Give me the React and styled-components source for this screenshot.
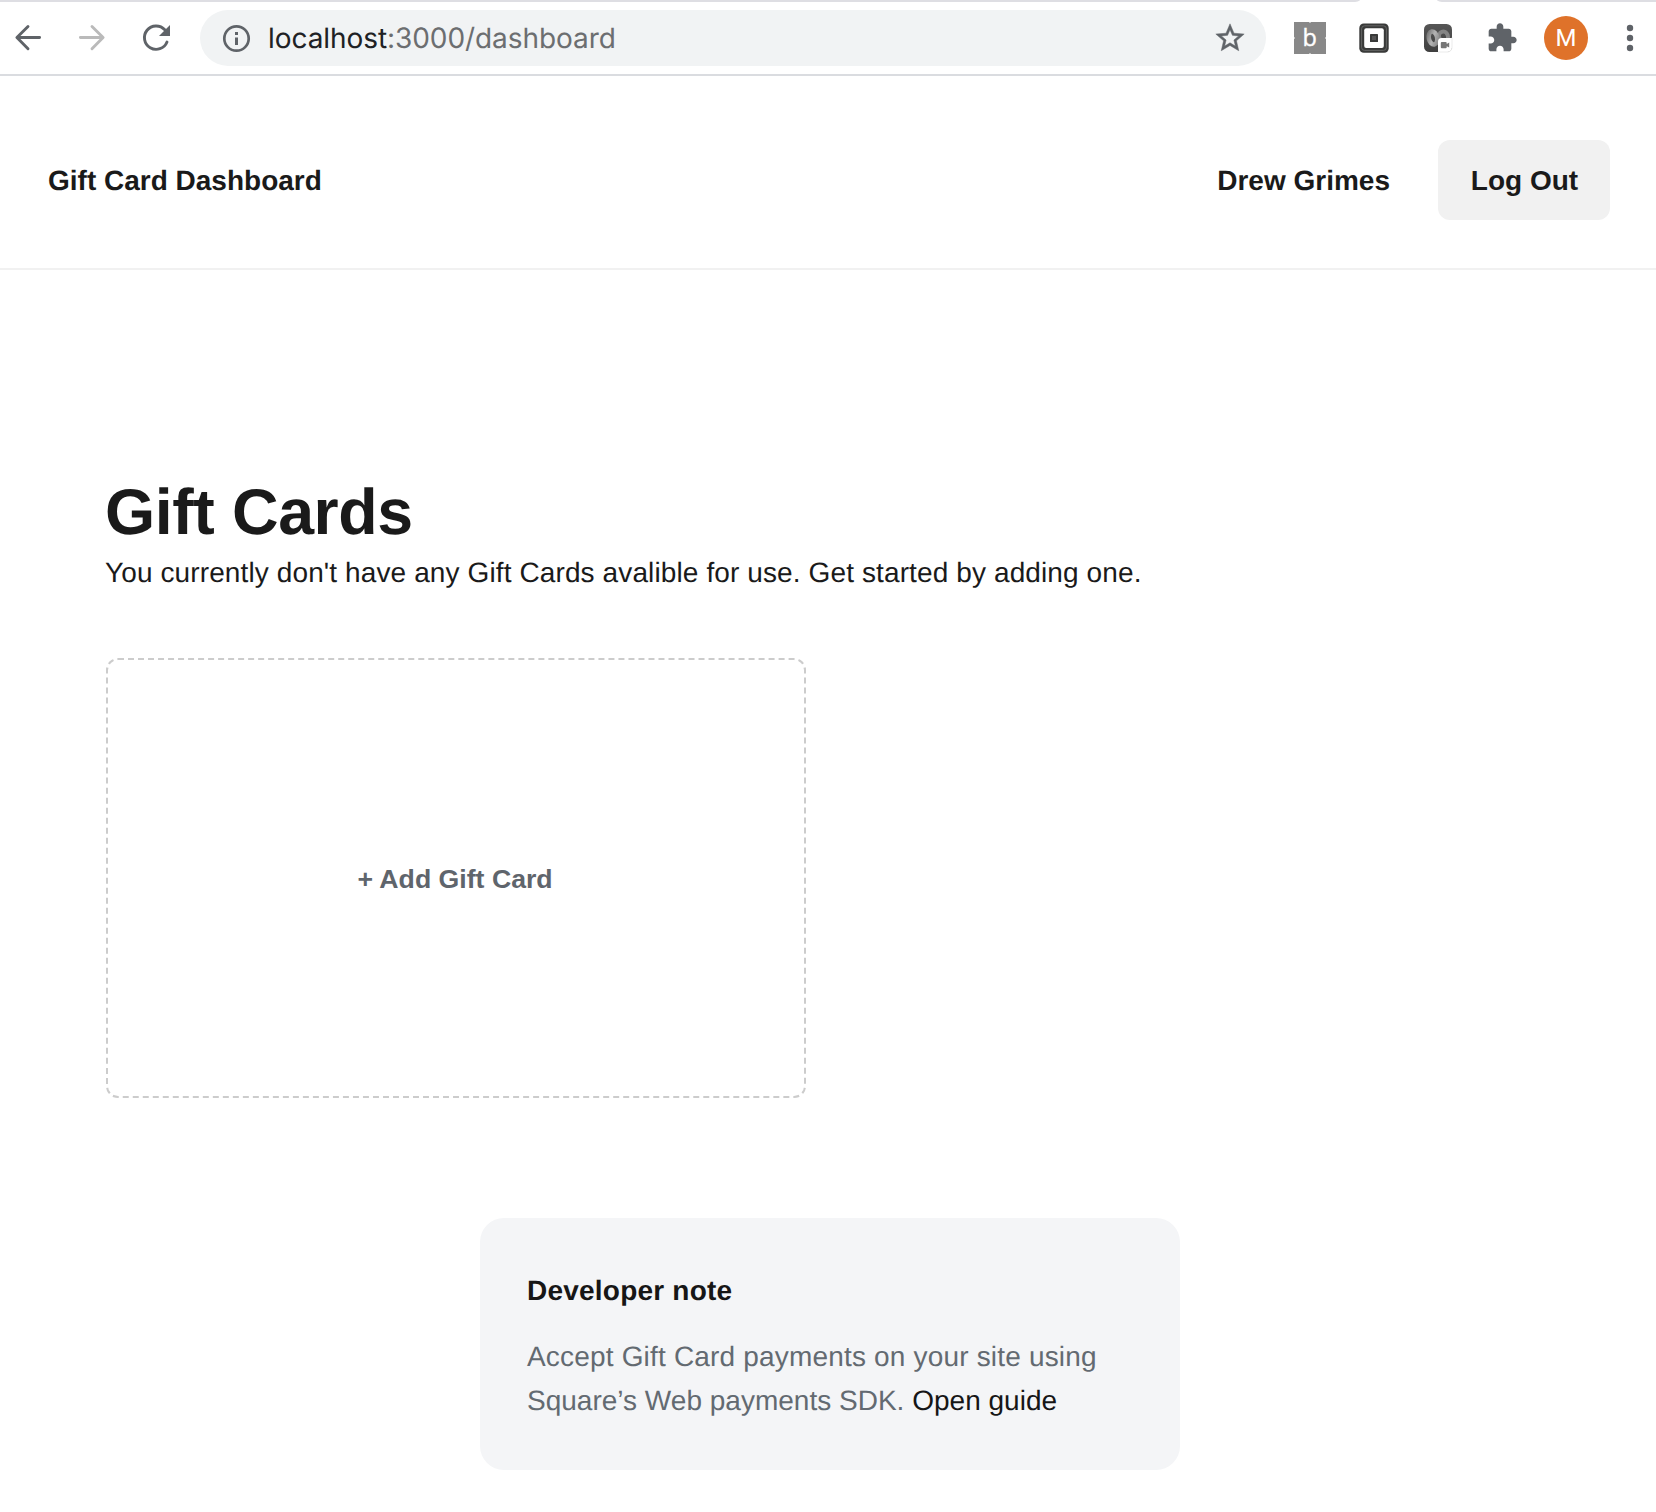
import React from "react";
import styled, { createGlobalStyle } from "styled-components";

const GlobalStyle = createGlobalStyle`
  *, *::before, *::after { box-sizing: border-box; }
  html, body { margin: 0; padding: 0; background: #fff; }
  body {
    color: #1a1a1a;
    font-family: "Liberation Sans", Arial, Helvetica, sans-serif;
    font-size: 28px;
    line-height: 44px;
    text-rendering: geometricPrecision;
  }
  h1, h2, p { margin: 0; }
  button { font: inherit; color: inherit; border: 0; padding: 0; background: none; }
  svg { display: block; flex: none; }
`;

const Page = styled.div`
  display: flex;
  flex-direction: column;
  width: 1656px;
  height: 1512px;
  overflow: hidden;
`;

/* ---------- browser chrome ---------- */

const TabEdge = styled.div`
  display: flex;
  justify-content: space-between;
  height: 2px;
`;

const TabStrip = styled.div`
  width: ${(p) => p.$width}px;
  height: 2px;
  background: #dedee3;
  border-bottom-right-radius: ${(p) => (p.$side === "left" ? "8px 2px" : "0")};
  border-bottom-left-radius: ${(p) => (p.$side === "right" ? "8px 2px" : "0")};
`;

const Toolbar = styled.div`
  display: flex;
  align-items: center;
  height: 74px;
  padding: 0 10px 0 12px;
  border-bottom: 2px solid #dadce0;
  color: #5f6368;
`;

const IconButton = styled.button`
  display: flex;
  align-items: center;
  justify-content: center;
  flex: none;
  width: 32px;
  height: 32px;
  margin-right: ${(p) => p.$gap || 0}px;
  color: ${(p) => p.$color || "#5f6368"};
`;

const AddressBar = styled.div`
  display: flex;
  align-items: center;
  width: 1066px;
  height: 56px;
  padding: 0 19px 0 20px;
  margin-right: 28px;
  border-radius: 28px;
  background: #f1f3f4;
`;

const Url = styled.div`
  flex: 1;
  margin-left: 16px;
  font-family: Inter, Roboto, sans-serif;
  font-size: 28px;
  line-height: 56px;
  letter-spacing: -0.07px;
  color: #6c6e70;
`;

const Host = styled.span`
  color: #202124;
`;

const Avatar = styled.div`
  flex: none;
  width: 44px;
  height: 44px;
  margin-right: 26px;
  border-radius: 50%;
  background: #df722a;
  color: #fff;
  font-family: Roboto, sans-serif;
  font-size: 24px;
  line-height: 45px;
  text-align: center;
`;

/* ---------- page ---------- */

const Header = styled.header`
  display: flex;
  align-items: center;
  height: 194px;
  padding: 64px 46px 48px 48px;
  border-bottom: 2px solid #f1f1f1;
  font-weight: 700;
`;

const Brand = styled.div`
  flex: 1;
  padding-top: 2px;
`;

const UserName = styled.div`
  margin-right: 48px;
  padding-top: 2px;
`;

const LogoutButton = styled.button`
  width: 172px;
  height: 80px;
  padding: 2px 0 0 1px;
  border-radius: 12px;
  background: #f1f1f1;
`;

const Main = styled.main`
  display: flex;
  flex-direction: column;
  padding: 206px 106px 0;
`;

const Title = styled.h1`
  margin-left: -1px;
  font-size: 64.5px;
  line-height: 72px;
  font-weight: 700;
  letter-spacing: -0.4px;
`;

const Lead = styled.p`
  margin: 3px 0 63px -1px;
  letter-spacing: 0.115px;
`;

const AddCard = styled.button`
  width: 700px;
  height: 440px;
  padding: 2px 2px 0 0;
  border: 2px dashed #ccc;
  border-radius: 12px;
  color: #5f656c;
  font-size: 26.667px;
  font-weight: 700;
`;

const Note = styled.aside`
  width: 700px;
  height: 252px;
  margin: 120px 0 0 374px;
  padding: 51px 46px 47px 47px;
  border-radius: 24px;
  background: #f4f5f7;
`;

const NoteTitle = styled.h2`
  margin-bottom: 22px;
  font-size: 28px;
  line-height: 44px;
  font-weight: 700;
  letter-spacing: 0.22px;
  color: #161616;
`;

const NoteText = styled.p`
  color: #636a71;
`;

const NoteLine = styled.span`
  display: block;
  letter-spacing: ${(p) => p.$tracking}px;
`;

const GuideLink = styled.a`
  color: #161616;
`;

/* ---------- icons ---------- */

const BackIcon = () => (
  <svg width="32" height="32" viewBox="0 0 32 32" fill="none" stroke="currentColor" strokeWidth="2.9" strokeLinecap="round" strokeLinejoin="round">
    <path d="M27.6 15.5H5.2M16 4.5L4.9 15.5L16 26.7" />
  </svg>
);

const ForwardIcon = () => (
  <svg width="32" height="32" viewBox="0 0 32 32" fill="none" stroke="currentColor" strokeWidth="2.9" strokeLinecap="round" strokeLinejoin="round">
    <path d="M4.4 15.5H26.8M16 4.5L27.1 15.5L16 26.7" />
  </svg>
);

const ReloadIcon = () => (
  <svg width="32" height="32" viewBox="0 0 32 32" fill="none">
    <path d="M27 20A11.7 11.7 0 1 1 24.8 7.8" stroke="currentColor" strokeWidth="2.9" strokeLinecap="round" />
    <path d="M30 3V14H19z" fill="currentColor" />
  </svg>
);

const InfoIcon = () => (
  <svg width="32" height="32" viewBox="0 0 32 32">
    <circle cx="16.5" cy="16.5" r="12.2" fill="none" stroke="currentColor" strokeWidth="2.7" />
    <path d="M15 10h3v3h-3zM15 15.4h3v7.6h-3z" fill="currentColor" />
  </svg>
);

const StarIcon = () => (
  <svg width="34" height="34" viewBox="0 0 24 24" fill="currentColor" stroke="currentColor" strokeWidth="0.35">
    <path d="M22 9.24l-7.19-.62L12 2 9.19 8.63 2 9.24l5.46 4.73L5.82 21 12 17.27 18.18 21l-1.63-7.03L22 9.24zM12 15.4l-3.76 2.27 1-4.28-3.32-2.88 4.38-.38L12 6.1l1.71 4.04 4.38.38-3.32 2.88 1 4.28L12 15.4z" />
  </svg>
);

const LetterIcon = () => (
  <svg width="32" height="32" viewBox="0 0 32 32">
    <path fill="#888" d="M0 0H15L16 1L17 0H32V15L31 16L32 17V32H17L16 31L15 32H0V17L1 16L0 15z" />
    <circle cx="16.2" cy="18" r="3.6" fill="#777" />
    <text x="15.6" y="24" textAnchor="middle" fill="#fff" stroke="#fff" strokeWidth="0.4" fontFamily="Open Sans, sans-serif" fontSize="23.5">b</text>
  </svg>
);

const SquareIcon = () => (
  <svg width="32" height="32" viewBox="0 0 32 32" fill="none">
    <rect x="1.3" y="1.5" width="29.4" height="29.2" rx="4.5" fill="#393a39" />
    <rect x="3.6" y="3.8" width="24.8" height="24.6" rx="3" stroke="#6d6e6d" strokeWidth="0.8" />
    <rect x="6.2" y="6.3" width="19.6" height="19.6" rx="2" fill="#fff" />
    <rect x="12" y="12" width="8" height="8" rx="0.6" fill="#393a39" />
    <rect x="14" y="14" width="4" height="4" fill="#555" />
  </svg>
);

const RecorderIcon = () => (
  <svg width="32" height="32" viewBox="0 0 32 32" fill="none">
    <defs>
      <linearGradient id="recorderTile" x1="0" y1="0" x2="0" y2="1">
        <stop offset="0" stopColor="#565656" />
        <stop offset="1" stopColor="#3f3f3f" />
      </linearGradient>
      <linearGradient id="recorderRing" x1="0" y1="0" x2="1" y2="1">
        <stop offset="0" stopColor="#777" />
        <stop offset="0.5" stopColor="#b4b4b4" />
        <stop offset="1" stopColor="#858585" />
      </linearGradient>
    </defs>
    <rect x="2" y="2" width="28" height="28" rx="5.5" fill="url(#recorderTile)" />
    <ellipse cx="21.5" cy="14.5" rx="4.4" ry="5" stroke="#858585" strokeWidth="4" transform="rotate(-20 21.5 14.5)" />
    <ellipse cx="11" cy="16" rx="4.2" ry="6.6" stroke="url(#recorderRing)" strokeWidth="4.6" transform="rotate(-12 11 16)" />
    <path d="M19.5 16H30V25.5A4.5 4.5 0 0 1 25.5 30H16V19.5A3.5 3.5 0 0 1 19.5 16z" fill="#fff" />
    <path d="M19.8 20H23.7Q24.7 20 24.7 21V22L27.2 20.6V25.6L24.7 24.2V25.2Q24.7 26.2 23.7 26.2H19.8Q18.8 26.2 18.8 25.2V21Q18.8 20 19.8 20z" fill="#777" />
    <path d="M30 15.5V25.5A4.5 4.5 0 0 1 25.5 30H16" stroke="#ddd" strokeWidth="0.6" />
  </svg>
);

const PuzzleIcon = () => (
  <svg width="32" height="32" viewBox="0 0 24 24" fill="currentColor">
    <path d="M20.5 11H19V7c0-1.1-.9-2-2-2h-4V3.5C13 2.12 11.88 1 10.5 1S8 2.12 8 3.5V5H4c-1.1 0-1.99.9-1.99 2v3.8H3.5c1.49 0 2.7 1.21 2.7 2.7s-1.21 2.7-2.7 2.7H2V20c0 1.1.9 2 2 2h3.8v-1.5c0-1.49 1.21-2.7 2.7-2.7 1.49 0 2.7 1.21 2.7 2.7V22H17c1.1 0 2-.9 2-2v-4h1.5c1.38 0 2.5-1.12 2.5-2.5S21.88 11 20.5 11z" />
  </svg>
);

const MenuIcon = () => (
  <svg width="32" height="32" viewBox="0 0 32 32" fill="currentColor">
    <circle cx="16" cy="6" r="3.2" />
    <circle cx="16" cy="16" r="3.2" />
    <circle cx="16" cy="26" r="3.2" />
  </svg>
);

function BrowserBar() {
  return (
    <>
      <TabEdge>
        <TabStrip $width={1360} $side="left" />
        <TabStrip $width={219} $side="right" />
      </TabEdge>
      <Toolbar>
        <IconButton $gap={32} aria-label="Back"><BackIcon /></IconButton>
        <IconButton $gap={32} $color="#bababa" aria-label="Forward"><ForwardIcon /></IconButton>
        <IconButton $gap={28} aria-label="Reload"><ReloadIcon /></IconButton>
        <AddressBar>
          <InfoIcon />
          <Url><Host>localhost</Host>:3000/dashboard</Url>
          <StarIcon />
        </AddressBar>
        <IconButton $gap={32} aria-label="Letter extension"><LetterIcon /></IconButton>
        <IconButton $gap={32} aria-label="Square extension"><SquareIcon /></IconButton>
        <IconButton $gap={32} aria-label="Recorder extension"><RecorderIcon /></IconButton>
        <IconButton $gap={26} aria-label="Extensions"><PuzzleIcon /></IconButton>
        <Avatar>M</Avatar>
        <IconButton aria-label="Menu"><MenuIcon /></IconButton>
      </Toolbar>
    </>
  );
}

export default function App() {
  return (
    <Page>
      <GlobalStyle />
      <BrowserBar />
      <Header>
        <Brand>Gift Card Dashboard</Brand>
        <UserName>Drew Grimes</UserName>
        <LogoutButton>Log Out</LogoutButton>
      </Header>
      <Main>
        <Title>Gift Cards</Title>
        <Lead>You currently don't have any Gift Cards avalible for use. Get started by adding one.</Lead>
        <AddCard>+ Add Gift Card</AddCard>
        <Note>
          <NoteTitle>Developer note</NoteTitle>
          <NoteText>
            <NoteLine $tracking={0.18}>Accept Gift Card payments on your site using</NoteLine>
            <NoteLine $tracking={0.01}>
              Square’s Web payments SDK. <GuideLink>Open guide</GuideLink>
            </NoteLine>
          </NoteText>
        </Note>
      </Main>
    </Page>
  );
}
